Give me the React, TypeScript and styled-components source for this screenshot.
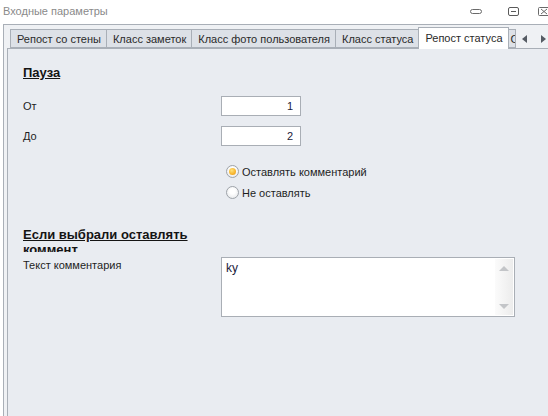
import React from 'react'
import styled, { createGlobalStyle } from 'styled-components'

const GlobalStyle = createGlobalStyle`
  html, body {
    margin: 0;
    padding: 0;
    background: #ffffff;
    overflow: hidden;
  }
  * {
    box-sizing: border-box;
  }
`

const Window = styled.div`
  width: 548px;
  height: 416px;
  overflow: hidden;
  display: flex;
  flex-direction: column;
  background: #ffffff;
  font-family: 'Liberation Sans', Arial, sans-serif;
  font-size: 11px;
  color: #1e1e1e;
`

const TitleBar = styled.div`
  height: 24px;
  flex: none;
  display: flex;
  align-items: center;
  padding: 0 0 2px 3px;
`

const Caption = styled.div`
  flex: 1;
  color: #8a8a8a;
  font-size: 11px;
`

const Controls = styled.div`
  display: flex;
  align-items: center;
  margin-right: -2px;
`

const ControlButton = styled.div<{ gap: number }>`
  height: 14px;
  margin-left: ${({ gap }) => gap}px;
  display: flex;
  align-items: center;
`

const Frame = styled.div`
  flex: 1;
  width: 560px;
  margin-left: 3px;
  border-left: 1px solid #a9afb7;
  border-top: 1px solid #a9afb7;
  background: #eff1f4;
  padding-left: 3px;
  display: flex;
  flex-direction: column;
`

const TabStrip = styled.div`
  height: 23px;
  flex: none;
  display: flex;
  align-items: flex-end;
  padding-left: 3px;
  position: relative;
  z-index: 1;
`

const Tab = styled.div<{ active?: boolean }>`
  height: ${({ active }) => (active ? '22px' : '19px')};
  margin-bottom: ${({ active }) => (active ? '-1px' : '0')};
  margin-left: -1px;
  padding: ${({ active }) => (active ? '4px 5px 0 6px' : '3px 5px 0 6px')};
  border: 1px solid #a9afb7;
  border-bottom: ${({ active }) => (active ? 'none' : '1px solid #a9afb7')};
  background: ${({ active }) => (active ? '#ffffff' : '#dde1e7')};
  color: #2a2a2a;
  font-size: 11px;
  line-height: 13px;
  white-space: nowrap;
  &:first-child {
    margin-left: 0;
  }
`

const PartialTab = styled(Tab)`
  width: 8px;
  overflow: hidden;
  padding: 3px 0 0 2px;
`

const ScrollArrows = styled.div`
  display: flex;
  align-items: center;
  height: 19px;
  gap: 14px;
  margin-left: 6px;
`

const Arrow = styled.span<{ dir: 'left' | 'right' }>`
  width: 0;
  height: 0;
  border-top: 4px solid transparent;
  border-bottom: 4px solid transparent;
  ${({ dir }) => (dir === 'left' ? 'border-right: 5px solid #555b63;' : 'border-left: 5px solid #555b63;')}
`

const Panel = styled.div`
  flex: 1;
  border-left: 1px solid #a9afb7;
  border-top: 1px solid #a9afb7;
  background: #e9ecf1;
  padding: 16px 0 0 15px;
`

const SectionTitle = styled.div<{ clip?: boolean }>`
  font-size: 13px;
  font-weight: bold;
  line-height: ${({ clip }) => (clip ? '15px' : '16px')};
  text-decoration: underline;
  color: #141414;
  width: ${({ clip }) => (clip ? '190px' : 'auto')};
  height: ${({ clip }) => (clip ? '25px' : 'auto')};
  overflow: hidden;
`

const FieldRow = styled.div<{ top?: number; align?: string }>`
  display: grid;
  grid-template-columns: 198px auto;
  align-items: ${({ align }) => align || 'center'};
  margin-top: ${({ top }) => top ?? 0}px;
`

const Label = styled.div<{ pad?: number }>`
  font-size: 11px;
  line-height: 15px;
  padding-top: ${({ pad }) => pad ?? 0}px;
  color: #1e1e1e;
`

const NumberBox = styled.input`
  width: 80px;
  height: 20px;
  border: 1px solid #a9aeb5;
  background: #ffffff;
  padding: 0 7px 0 4px;
  text-align: right;
  font-family: 'Liberation Sans', Arial, sans-serif;
  font-size: 11px;
  color: #1a1a3a;
  outline: none;
`

const RadioGroup = styled.div`
  margin: 15px 0 0 203px;
  display: flex;
  flex-direction: column;
`

const RadioRow = styled.label`
  height: 21px;
  display: flex;
  align-items: center;
  gap: 3px;
  font-size: 11px;
`

const RadioDot = styled.span<{ checked?: boolean }>`
  width: 13px;
  height: 13px;
  border-radius: 50%;
  border: 1px solid #9ea3a9;
  background: radial-gradient(circle at 50% 40%, #ffffff 30%, #e0e2e5 100%);
  display: flex;
  align-items: center;
  justify-content: center;
  &::after {
    content: '';
    display: ${({ checked }) => (checked ? 'block' : 'none')};
    width: 7px;
    height: 7px;
    border-radius: 50%;
    background: radial-gradient(circle at 40% 35%, #ffe27a 0%, #f7b733 55%, #e8900c 100%);
  }
`

const MemoBox = styled.div`
  width: 294px;
  height: 60px;
  border: 1px solid #a9aeb5;
  background: #ffffff;
  display: flex;
`

const MemoText = styled.div`
  flex: 1;
  padding: 3px 0 0 4px;
  font-size: 12px;
  line-height: 14px;
  color: #1a1a3a;
`

const ScrollBar = styled.div`
  width: 18px;
  margin: 1px 1px 1px 0;
  background: linear-gradient(to right, #fbfbfb, #ececec);
  display: flex;
  flex-direction: column;
  justify-content: space-between;
  align-items: center;
  padding: 7px 0 6px;
`

const ScrollArrow = styled.span<{ dir: 'up' | 'down' }>`
  width: 0;
  height: 0;
  border-left: 5px solid transparent;
  border-right: 5px solid transparent;
  ${({ dir }) => (dir === 'up' ? 'border-bottom: 5px solid #c3c5c8;' : 'border-top: 5px solid #c3c5c8;')}
`

const tabs = ['Репост со стены', 'Класс заметок', 'Класс фото пользователя', 'Класс статуса']

export default function App() {
  return (
    <Window>
      <GlobalStyle />
      <TitleBar>
        <Caption>Входные параметры</Caption>
        <Controls>
          <ControlButton gap={0}>
            <svg width="12" height="6" viewBox="0 0 12 6">
              <rect x="0.5" y="1.5" width="11" height="4" rx="2" fill="none" stroke="#6a6a6a" />
            </svg>
          </ControlButton>
          <ControlButton gap={26}>
            <svg width="11" height="9" viewBox="0 0 11 9">
              <rect x="0.5" y="0.5" width="10" height="8" rx="1.5" fill="none" stroke="#5a5a5a" />
              <line x1="3" y1="4.5" x2="8" y2="4.5" stroke="#5a5a5a" />
            </svg>
          </ControlButton>
          <ControlButton gap={19}>
            <svg width="12" height="9" viewBox="0 0 12 9">
              <rect x="0.5" y="0.5" width="11" height="8" rx="1" fill="none" stroke="#6a6a6a" />
              <path d="M3 2 L9 7 M9 2 L3 7" stroke="#6a6a6a" />
            </svg>
          </ControlButton>
        </Controls>
      </TitleBar>
      <Frame>
        <TabStrip>
          {tabs.map((t) => (
            <Tab key={t}>{t}</Tab>
          ))}
          <Tab active>Репост статуса</Tab>
          <PartialTab>Сохранение</PartialTab>
          <ScrollArrows>
            <Arrow dir="left" />
            <Arrow dir="right" />
          </ScrollArrows>
        </TabStrip>
        <Panel>
          <SectionTitle>Пауза</SectionTitle>
          <FieldRow top={15}>
            <Label>От</Label>
            <NumberBox readOnly value="1" />
          </FieldRow>
          <FieldRow top={10}>
            <Label>До</Label>
            <NumberBox readOnly value="2" />
          </FieldRow>
          <RadioGroup>
            <RadioRow>
              <RadioDot checked />
              Оставлять комментарий
            </RadioRow>
            <RadioRow>
              <RadioDot />
              Не оставлять
            </RadioRow>
          </RadioGroup>
          <FieldRow top={24} align="start">
            <SectionTitle clip>Если выбрали оставлять коммент</SectionTitle>
          </FieldRow>
          <FieldRow top={5} align="start">
            <Label pad={1}>Текст комментария</Label>
            <MemoBox>
              <MemoText>ky</MemoText>
              <ScrollBar>
                <ScrollArrow dir="up" />
                <ScrollArrow dir="down" />
              </ScrollBar>
            </MemoBox>
          </FieldRow>
        </Panel>
      </Frame>
    </Window>
  )
}
